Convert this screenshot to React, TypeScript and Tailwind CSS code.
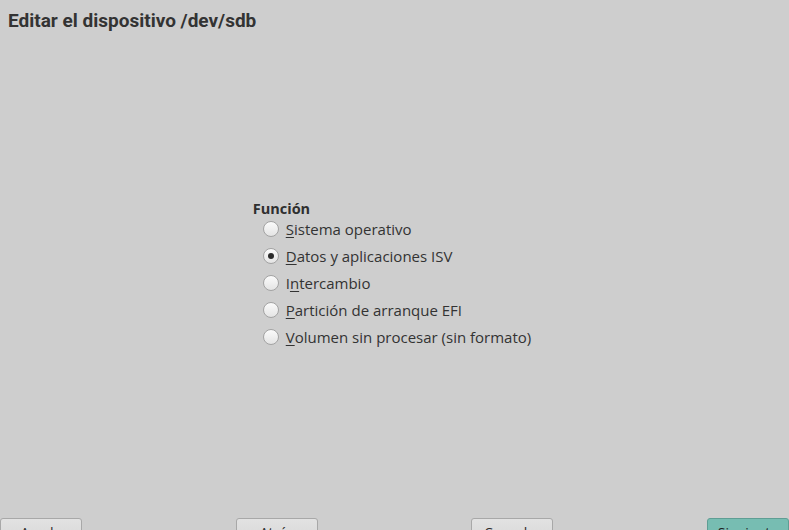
import React from "react";

const options = [
  { pre: "", u: "S", post: "istema operativo", checked: false },
  { pre: "", u: "D", post: "atos y aplicaciones ISV", checked: true },
  { pre: "I", u: "n", post: "tercambio", checked: false },
  { pre: "", u: "P", post: "artición de arranque EFI", checked: false },
  { pre: "", u: "V", post: "olumen sin procesar (sin formato)", checked: false },
];

function Radio({ checked }: { checked: boolean }) {
  return (
    <span className="w-[16px] h-[16px] rounded-full border border-[#a3a3a3] bg-gradient-to-b from-[#fbfbfb] to-[#e4e4e4] flex items-center justify-center shrink-0">
      {checked && <span className="w-[6px] h-[6px] rounded-full bg-[#2b2b2b]" />}
    </span>
  );
}

function Btn({ label, primary }: { label: string; primary?: boolean }) {
  return (
    <div
      className={
        "w-[82px] h-[30px] rounded-[3px] border flex items-start justify-center pt-[4px] text-[14px] leading-[20px] " +
        (primary
          ? "bg-[#77bdb2] border-[#5f9e94] text-[#1f1f1f]"
          : "bg-gradient-to-b from-[#e2e2e2] to-[#d6d6d6] border-[#a8a8a8] text-[#2b2b2b]")
      }
    >
      {label}
    </div>
  );
}

export default function App() {
  return (
    <div
      className="w-[789px] h-[530px] overflow-hidden bg-[#cecece] flex flex-col text-[#2f2f2f]"
      style={{ fontFamily: "'Open Sans', 'Noto Sans', sans-serif" }}
    >
      <div
        className="pl-[8px] pt-[8px] text-[19px] font-bold text-[#333333] leading-[26px]"
        style={{ fontFamily: "Roboto, 'Liberation Sans', sans-serif" }}
      >
        Editar el dispositivo /dev/sdb
      </div>
      <div className="flex-1 flex justify-center">
        <div className="pt-[165px] mr-[5px]">
          <div className="text-[14.5px] font-bold leading-[20px] text-[#2f2f2f]">Función</div>
          <div className="flex flex-col pl-[10px] pt-0 gap-[7px]">
            {options.map((o, i) => (
              <div key={i} className="flex items-center gap-[7px] h-[20px] text-[15px] text-[#333333]">
                <Radio checked={o.checked} />
                <span>
                  {o.pre}
                  <span className="underline underline-offset-[2px]">{o.u}</span>
                  {o.post}
                </span>
              </div>
            ))}
          </div>
        </div>
      </div>
      <div className="flex justify-between h-[12px]">
        <Btn label="Ayuda" />
        <Btn label="Atrás" />
        <Btn label="Cancelar" />
        <Btn label="Siguiente" primary />
      </div>
    </div>
  );
}
